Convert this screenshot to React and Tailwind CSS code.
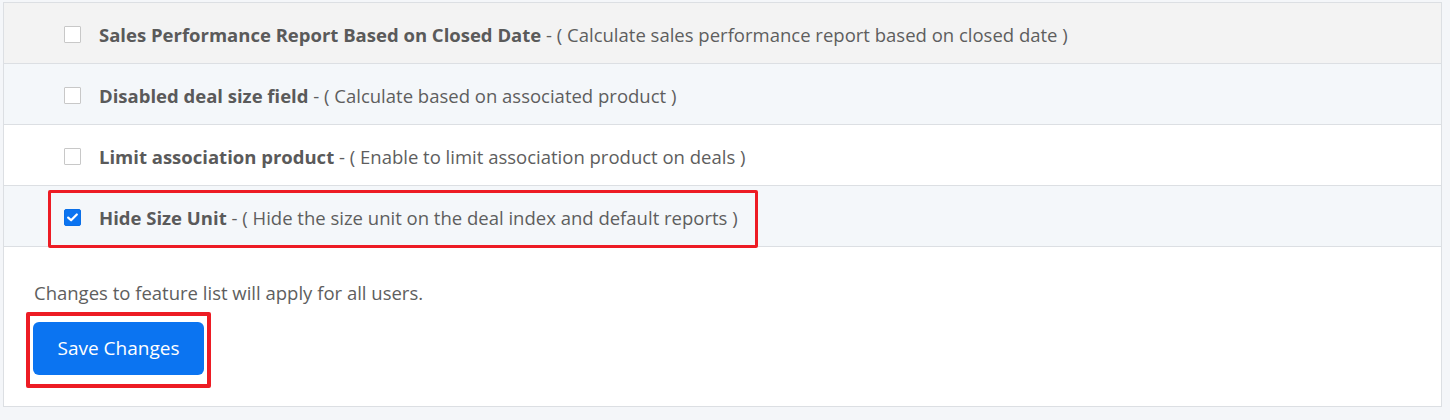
import React from "react";

const rows = [
  {
    title: "Sales Performance Report Based on Closed Date",
    desc: "Calculate sales performance report based on closed date",
    bg: "bg-[#f3f3f3]",
    checked: false,
  },
  {
    title: "Disabled deal size field",
    desc: "Calculate based on associated product",
    bg: "bg-[#f4f7fa]",
    checked: false,
  },
  {
    title: "Limit association product",
    desc: "Enable to limit association product on deals",
    bg: "bg-white",
    checked: false,
  },
  {
    title: "Hide Size Unit",
    desc: "Hide the size unit on the deal index and default reports",
    bg: "bg-[#f4f7fa]",
    checked: true,
    highlight: true,
  },
];

function Checkbox({ checked }) {
  if (checked) {
    return (
      <span className="flex h-[17px] w-[17px] shrink-0 items-center justify-center rounded-[2px] border border-[#0a6fe8] bg-[#0b74f1]">
        <svg width="11" height="9" viewBox="0 0 11 9" fill="none">
          <path d="M1.2 4.6 L4.1 7.3 L9.8 1.5" stroke="white" strokeWidth="2.2" strokeLinecap="round" strokeLinejoin="round" />
        </svg>
      </span>
    );
  }
  return <span className="block h-[17px] w-[17px] shrink-0 rounded-[1px] border border-[#c8c8c8] bg-white" />;
}

export default function App() {
  return (
    <div
      className="min-h-[420px] w-[1450px] bg-[#f4f6f9] pl-[3px] pt-[2px] text-[#5b5b5b]"
      style={{ fontFamily: "'Open Sans', 'Noto Sans', sans-serif" }}
    >
      <div className="w-[1439px] border border-[#dcdfe3] bg-white">
        {rows.map((r, i) => (
          <div
            key={i}
            className={`relative flex h-[61px] items-center border-b border-[#dcdfe3] pl-[60px] pt-[2px] ${r.bg}`}
          >
            <Checkbox checked={r.checked} />
            <div className="ml-[18px] pt-[3px] text-[18.5px] leading-none">
              <span className="font-bold text-[#5a5a5a]">{r.title}</span>
              <span className="text-[#5e5e5e]"> - ( {r.desc} )</span>
            </div>
            {r.highlight && (
              <div className="pointer-events-none absolute left-[44px] top-[4px] h-[58px] w-[710px] rounded-[2px] border-[3px] border-[#ed1c24]" />
            )}
          </div>
        ))}
        <div className="px-[30px] pb-[18px] pt-[32px]">
          <p className="text-[18.5px] leading-[27px] text-[#5e5e5e]">Changes to feature list will apply for all users.</p>
          <div className="ml-[-8px] mt-[6px] inline-block rounded-[2px] border-4 border-[#ed1c24] px-[3px] pb-[9px] pt-[6px]">
            <button className="flex h-[53px] w-[171px] items-center justify-center rounded-[6px] bg-[#0b74f1] text-[19px] text-white">
              Save Changes
            </button>
          </div>
        </div>
      </div>
    </div>
  );
}
